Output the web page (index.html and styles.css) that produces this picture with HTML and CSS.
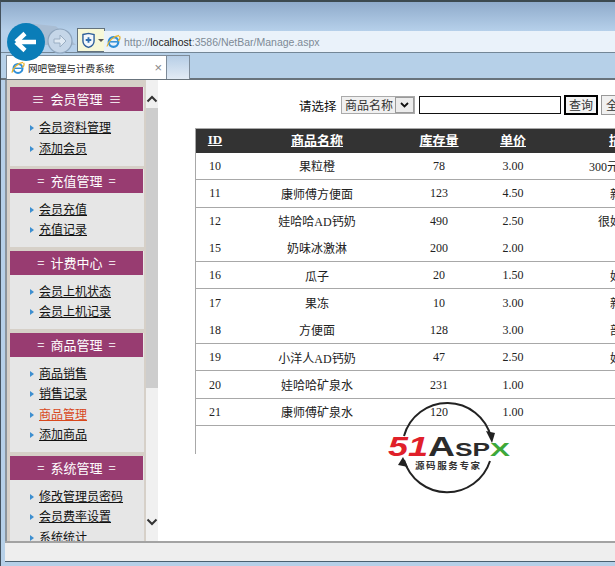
FILE: index.html
```html
<!DOCTYPE html>
<html lang="zh-CN">
<head>
<meta charset="utf-8">
<title>网吧管理与计费系统</title>
<link rel="stylesheet" href="styles.css">
</head>
<body>
<div class="window">
  <div class="toolbar">
    <div class="halo"></div>
    <div class="back">
      <svg width="38" height="38" viewBox="0 0 38 38"><circle cx="19" cy="19" r="19" fill="#0a7db8"/><path d="M9 19 18 10.500M9 19 18 27.500M9 19H29" fill="none" stroke="#fff" stroke-width="4.500"/></svg>
    </div>
    <div class="forward">
      <svg width="26" height="26" viewBox="0 0 26 26"><circle cx="13" cy="13" r="12" fill="#c5d6e8" stroke="#8ea5bd" stroke-width="1.200"/><path d="M7 11h6V7l6 6-6 6v-4H7z" fill="#dfe9f3" stroke="#9aaec3"/></svg>
    </div>
    <div class="compat">
      <svg width="14" height="17" viewBox="0 0 14 17"><path d="M1 2 7 .8 13 2v7c0 3.500-3 6-6 7-3-1-6-3.500-6-7z" fill="#f4f8fc" stroke="#2f5f9a" stroke-width="1.500"/><path d="M7 5v6M4 8h6" stroke="#2f6fb0" stroke-width="2"/></svg>
      <span class="caret"></span>
    </div>
    <div class="address">
      <svg class="ie" width="15" height="15" viewBox="0 0 15 15"><use href="#ie-logo"/></svg>
      <span class="url">http://<b>localhost</b>:3586/NetBar/Manage.aspx</span>
    </div>
  </div>
  <div class="tabs">
    <div class="tab">
      <svg class="ie" width="14" height="14" viewBox="0 0 15 15">
        <g id="ie-logo">
          <ellipse cx="7.500" cy="8" rx="4.800" ry="4.800" fill="none" stroke="#2f8fd8" stroke-width="2.200"/>
          <path d="M3.500 7.800h8" stroke="#2f8fd8" stroke-width="1.500"/>
          <path d="M1 12.500C2 7 8 2 13 1.500M13.500 2C14.500 4 13.500 6 12 7" fill="none" stroke="#e8b430" stroke-width="1.300"/>
        </g>
      </svg>
      <span class="tab-title">网吧管理与计费系统</span>
      <span class="tab-close">×</span>
    </div>
    <div class="tab-new"></div>
  </div>
  <div class="main">
    <aside class="sidebar">
      <section class="group">
        <h2 class="group-title">≡ 会员管理 ≡</h2>
        <ul class="group-links">
          <li><a href="#">会员资料管理</a></li>
          <li><a href="#">添加会员</a></li>
        </ul>
      </section>
      <section class="group">
        <h2 class="group-title">= 充值管理 =</h2>
        <ul class="group-links">
          <li><a href="#">会员充值</a></li>
          <li><a href="#">充值记录</a></li>
        </ul>
      </section>
      <section class="group">
        <h2 class="group-title">= 计费中心 =</h2>
        <ul class="group-links">
          <li><a href="#">会员上机状态</a></li>
          <li><a href="#">会员上机记录</a></li>
        </ul>
      </section>
      <section class="group">
        <h2 class="group-title">= 商品管理 =</h2>
        <ul class="group-links">
          <li><a href="#">商品销售</a></li>
          <li><a href="#">销售记录</a></li>
          <li><a href="#" class="current">商品管理</a></li>
          <li><a href="#">添加商品</a></li>
        </ul>
      </section>
      <section class="group">
        <h2 class="group-title">= 系统管理 =</h2>
        <ul class="group-links">
          <li><a href="#">修改管理员密码</a></li>
          <li><a href="#">会员费率设置</a></li>
          <li><a href="#">系统统计</a></li>
        </ul>
      </section>
    </aside>
    <div class="scrollbar">
      <svg class="arrow" width="12" height="8" viewBox="0 0 12 8"><path d="M1.500 6.500 6 2l4.500 4.500" fill="none" stroke="#333" stroke-width="2"/></svg>
      <div class="thumb"></div>
      <div class="rest"><svg class="arrow" width="12" height="8" viewBox="0 0 12 8"><path d="M1.500 1.500 6 6l4.500-4.500" fill="none" stroke="#333" stroke-width="2"/></svg></div>
    </div>
    <main class="content">
      <form class="search">
        <label class="search-label">请选择</label>
        <div class="select-box">
          <select class="search-select"><option>商品名称</option></select>
          <span class="select-arrow"><svg width="9" height="6" viewBox="0 0 9 6"><path d="M1 1l3.500 3.500L8 1" fill="none" stroke="#111" stroke-width="1.800"/></svg></span>
        </div>
        <input class="search-input" type="text">
        <button class="btn btn-primary" type="button">查询</button>
        <button class="btn" type="button">全部</button>
      </form>
      <div class="table-wrap">
        <table class="goods">
          <thead>
            <tr><th class="c-id"><a href="#">ID</a></th><th class="c-name"><a href="#">商品名称</a></th><th class="c-stock"><a href="#">库存量</a></th><th class="c-price"><a href="#">单价</a></th><th class="c-desc"><a href="#">描述</a></th></tr>
          </thead>
          <tbody>
            <tr><td>10</td><td>果粒橙</td><td>78</td><td>3.00</td><td>300元一公斤</td></tr>
            <tr><td>11</td><td>康师傅方便面</td><td>123</td><td>4.50</td><td>新款</td></tr>
            <tr class="no-line"><td>12</td><td>娃哈哈AD钙奶</td><td>490</td><td>2.50</td><td>很好喝的</td></tr>
            <tr><td>15</td><td>奶味冰激淋</td><td>200</td><td>2.00</td><td></td></tr>
            <tr><td>16</td><td>瓜子</td><td>20</td><td>1.50</td><td>好吃</td></tr>
            <tr class="no-line"><td>17</td><td>果冻</td><td>10</td><td>3.00</td><td>新款</td></tr>
            <tr><td>18</td><td>方便面</td><td>128</td><td>3.00</td><td>部分</td></tr>
            <tr><td>19</td><td>小洋人AD钙奶</td><td>47</td><td>2.50</td><td>好喝</td></tr>
            <tr><td>20</td><td>娃哈哈矿泉水</td><td>231</td><td>1.00</td><td></td></tr>
            <tr><td>21</td><td>康师傅矿泉水</td><td>120</td><td>1.00</td><td></td></tr>
          </tbody>
        </table>
      </div>
    </main>
    <svg class="watermark" width="130" height="100" viewBox="0 0 130 100">
      <path d="M16 35A45 45 0 0 1 103 36" fill="none" stroke="#222" stroke-width="2"/>
      <path d="M98 30l9 2-3 10z" fill="#222"/>
      <path d="M102 60A45 45 0 0 1 16 59" fill="none" stroke="#222" stroke-width="2"/>
      <path d="M10 64l10 2-5-10z" fill="#222"/>
      <text class="wm-51" x="0" y="55" textLength="40" lengthAdjust="spacingAndGlyphs">51</text>
      <text class="wm-asp" x="40" y="55" textLength="62" lengthAdjust="spacingAndGlyphs">Asp</text>
      <text class="wm-x" x="102" y="55" textLength="20" lengthAdjust="spacingAndGlyphs">x</text>
      <text class="wm-sub" x="27" y="68" textLength="65">源码服务专家</text>
    </svg>
  </div>
  <div class="statusbar"></div>
</div>
</body>
</html>
```
FILE: styles.css
```css
* { box-sizing: border-box; }
html, body { margin: 0; padding: 0; height: 100%; overflow: hidden; }
body { font-family: "Noto Sans CJK SC", "Liberation Serif", sans-serif; font-size: 12px; color: #111; }
.window { width: 615px; height: 566px; display: flex; flex-direction: column; background: #b6d0e8; border-top: 2px solid #3c4a50; border-left: 1px solid #44525e; position: relative; overflow: hidden; }

.toolbar { height: 51px; flex: none; display: flex; align-items: flex-start; padding: 21px 0 0 6px; background: linear-gradient(#8fabcb, #b6d0ea 29px); border-bottom: 1px solid #738696; position: relative; }
.halo { position: absolute; left: 25px; top: 21px; width: 50px; height: 22px; background: #a9bdd3; clip-path: polygon(0 0, 60% 15%, 100% 100%, 0 100%); }
.back { width: 38px; height: 38px; position: relative; z-index: 2; margin-right: 2px; }
.forward { width: 26px; height: 26px; margin-top: 5px; position: relative; margin-right: 4px; }
.compat { width: 28px; height: 24px; margin-top: 5px; background: #f7f8d8; border: 1px solid #63727d; display: flex; align-items: center; gap: 3px; padding-left: 4px; position: relative; z-index: 1; }
.caret { border: 3px solid transparent; border-top: 3px solid #555; margin-top: 3px; }
.address { flex: 1; height: 21px; margin-top: 8px; margin-left: -1px; background: #eaf2fa; display: flex; align-items: center; padding-left: 2px; position: relative; z-index: 1; }
.ie { flex: none; display: block; }
.url { margin-left: 3px; font-family: "Liberation Sans", sans-serif; font-size: 10.500px; color: #7d8a96; white-space: nowrap; }
.url b { font-weight: 400; color: #222; }

.tabs { height: 27px; flex: none; display: flex; padding: 2px 0 0 5px; background: #b6d0e8; border-bottom: 2px solid #68737c; }
.tab { width: 161px; height: 24px; background: #fff; border: 1px solid #7d8b99; border-bottom: 0; display: flex; align-items: center; padding-left: 4px; }
.tab-title { margin-left: 3px; font-size: 9.600px; color: #222; white-space: nowrap; }
.tab-close { margin-left: auto; margin-right: 4px; color: #888; font-size: 13px; font-family: "Liberation Sans", sans-serif; }
.tab-new { width: 23px; height: 24px; border: 1px solid #7d8b99; border-left: 0; border-bottom: 0; background: linear-gradient(#b7cee6, #e2ebf5); }

.main { flex: 1; min-height: 0; display: flex; background: #fff; margin-left: 4px; border-left: 2px solid #8c959c; position: relative; overflow: hidden; }
.sidebar { width: 139px; flex: none; background: #d6d0c8; padding: 7px 2px 0 3px; overflow: hidden; }
.group { margin-bottom: 3.400px; background: #e6e6e6; }
.group-title { margin: 0 1px 0 0; height: 24px; line-height: 23px; text-align: center; background: #983c71; color: #fff; font-size: 13px; font-weight: 400; white-space: pre; word-spacing: 3px; }
.group-links { margin: 0; padding: 6px 0 7.500px 29px; list-style: none; }
.group-links li { height: 20.500px; line-height: 20px; position: relative; }
.group-links li::before { content: ""; position: absolute; left: -9px; top: 8px; border: 3px solid transparent; border-left: 4px solid #3d8fd0; border-right: 0; }
.group-links a { color: #111; text-decoration: underline; font-size: 12px; white-space: nowrap; }
.group-links a.current { color: #d8481c; }

.scrollbar { width: 12px; flex: none; display: flex; flex-direction: column; background: #f0f0f0; }
.arrow { display: block; margin: 0 auto; }
.scrollbar > .arrow { margin-top: 15px; margin-bottom: 5px; }
.thumb { height: 280px; flex: none; background: #cdcdcd; }
.rest { flex: 1; display: flex; flex-direction: column; justify-content: flex-end; padding-bottom: 15px; }

.content { flex: 1; min-width: 0; overflow: hidden; padding: 16px 0 0 38px; }
.search { display: flex; align-items: center; height: 18px; margin-bottom: 14px; margin-left: 103px; white-space: nowrap; }
.search-label { font-size: 12.500px; width: 42px; flex: none; }
.select-box { width: 74px; height: 18px; flex: none; margin-right: 4px; position: relative; }
.search-select { appearance: none; -webkit-appearance: none; display: block; width: 100%; height: 100%; padding: 0 0 0 3px; margin: 0; font-family: inherit; font-size: 12px; line-height: 16px; background: #f0f0f0; border: 1px solid #aaa; border-radius: 0; color: #333; }
.select-arrow { position: absolute; right: 1px; top: 1px; width: 19px; height: 16px; display: flex; align-items: center; justify-content: center; background: #ececec; border: 1px solid #9a9a9a; }
.search-input { width: 142px; height: 18px; flex: none; border: 1px solid #111; margin: 0 3px 0 0; padding: 0; background: #fff; }
.btn { width: 34px; height: 20px; flex: none; padding: 0; margin-right: 3px; font-family: inherit; font-size: 12px; line-height: 1; border: 1px solid #999; background: #f0f0f0; color: #333; border-radius: 0; }
.btn-primary { border: 2px solid #000; background: #f4f4f4; }

.table-wrap { width: 600px; height: 326px; margin-left: -1px; border-left: 1px solid #a8a8a8; }
.goods { width: 500px; border-collapse: collapse; table-layout: fixed; font-family: "Liberation Serif", "Noto Sans CJK SC", serif; font-size: 12px; }
.goods thead tr { background: #333; border-top: 1px solid #a8a8a8; }
.goods th { height: 24px; padding: 0 0 2px; font-size: 13px; font-weight: 700; }
.goods th a { color: #fff; text-decoration: underline; }
.c-id { width: 38px; }
.c-name { width: 166px; }
.c-stock { width: 78px; }
.c-price { width: 70px; }
.c-desc { width: 148px; }
.goods td { height: 27.300px; padding: 1px 0 0; text-align: center; color: #222; font-size: 12px; white-space: nowrap; }
.goods tbody tr { border-bottom: 1px solid #a8a8a8; }
.goods tbody tr.no-line { border-bottom: 0; }

.watermark { position: absolute; left: 381px; top: 321px; font-family: "Liberation Sans", sans-serif; font-weight: 700; }
.wm-51 { fill: #e0202a; font-size: 28px; font-style: italic; }
.wm-asp { fill: #2b2b2b; font-size: 27px; font-variant: small-caps; }
.wm-x { fill: #3ea83a; font-size: 27px; font-variant: small-caps; }
.wm-sub { fill: #333; font-family: "Noto Sans CJK SC", sans-serif; font-size: 9.500px; }

.statusbar { flex: none; margin-left: 4px; background: #eeeeee; border-top: 2px solid #a3a3a3; border-bottom: 1px solid #4a6070; box-sizing: content-box; height: 18px; margin-bottom: 4px; }
```
